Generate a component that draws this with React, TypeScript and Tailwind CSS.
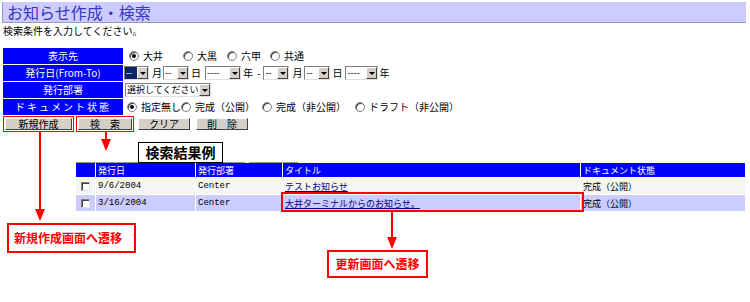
import React from "react";

const font = "font-['MS_PGothic','Noto_Sans_CJK_JP',sans-serif]";

const Radio = ({ checked = false }: { checked?: boolean }) => (
  <span className="inline-flex w-[10px] h-[10px] rounded-full border border-[#808080] bg-white items-center justify-center mr-[4px] shadow-[inset_1px_1px_0_#404040]">
    {checked && <span className="w-[4px] h-[4px] rounded-full bg-black" />}
  </span>
);

const Select = ({ text, width, active = false, className = "" }: { text: string; width: number; active?: boolean; className?: string }) => (
  <span
    className={`inline-flex h-[14px] items-stretch border border-t-[#808080] border-l-[#808080] border-b-[#e0e0e0] border-r-[#e0e0e0] bg-white ${className}`}
    style={{ width }}
  >
    <span className={`flex-1 px-[1px] text-[9px] leading-[12px] overflow-hidden whitespace-nowrap ${active ? "bg-[#0a246a] text-white" : "text-black"}`}>{text}</span>
    <span className="w-[11px] bg-[#d4d0c8] border border-t-white border-l-white border-b-[#404040] border-r-[#404040] flex items-center justify-center">
      <span className="w-0 h-0 border-l-[3px] border-r-[3px] border-t-[3px] border-l-transparent border-r-transparent border-t-black" />
    </span>
  </span>
);

const Btn = ({ label, width }: { label: string; width: number }) => (
  <div
    className="flex h-[12px] items-center justify-center bg-[#d4d0c8] border border-t-white border-l-white border-b-[#404040] border-r-[#404040] text-[10px] leading-none text-black"
    style={{ width }}
  >
    {label}
  </div>
);

const Arrow = ({ x, y1, y2 }: { x: number; y1: number; y2: number }) => (
  <svg className="absolute" style={{ left: x - 6, top: y1 }} width={12} height={y2 - y1}>
    <line x1={6} y1={0} x2={6} y2={y2 - y1 - 10} stroke="#ff0000" strokeWidth={2} />
    <polygon points={`1,${y2 - y1 - 12} 11,${y2 - y1 - 12} 6,${y2 - y1}`} fill="#ff0000" />
  </svg>
);

export default function App() {
  const rows = [
    { date: "9/6/2004", dept: "Center", title: "テストお知らせ", state: "完成（公開）", bg: "bg-[#f5f5f5]" },
    { date: "3/16/2004", dept: "Center", title: "大井ターミナルからのお知らせ。", state: "完成（公開）", bg: "bg-[#ccccff]" },
  ];

  return (
    <div className={`relative w-[750px] h-[302px] bg-white overflow-hidden text-black ${font}`}>
      <div className="pt-[2px] pl-[2px] pr-[4px]">
        <div className="h-[21px] bg-[#ccccff] border-b border-l border-[#9999bb] flex items-center pl-[4px] text-[16px] leading-none text-[#3838c0]">
          お知らせ作成・検索
        </div>
        <div className="text-[10px] leading-[12px] mt-[2px] pl-[1px]">検索条件を入力してください。</div>
      </div>

      <div className="mt-[11px] ml-[3px] grid grid-cols-[120px_1fr] gap-y-px text-[10px] leading-none">
        <div className="h-[16px] bg-[#0000ff] text-white flex items-center justify-center">表示先</div>
        <div className="flex items-center pl-[6px] whitespace-nowrap">
          <Radio checked /><span className="w-[40px]">大井</span>
          <Radio /><span className="w-[30px]">大黒</span>
          <Radio /><span className="w-[29px]">六甲</span>
          <Radio /><span>共通</span>
        </div>

        <div className="h-[16px] bg-[#0000ff] text-white flex items-center justify-center">発行日(From-To)</div>
        <div className="flex items-center pl-[1px]">
          <Select text="--" width={25} active /><span className="ml-[3px]">月</span>
          <Select text="--" width={26} className="ml-[1px]" /><span className="ml-[2px]">日</span>
          <Select text="----" width={36} className="ml-[4px]" /><span className="ml-[2px]">年</span>
          <span className="ml-[4px]">-</span>
          <Select text="--" width={26} className="ml-[3px]" /><span className="ml-[3px]">月</span>
          <Select text="--" width={26} className="ml-[2px]" /><span className="ml-[2px]">日</span>
          <Select text="----" width={33} className="ml-[3px]" /><span className="ml-[1px]">年</span>
        </div>

        <div className="h-[16px] bg-[#0000ff] text-white flex items-center justify-center">発行部署</div>
        <div className="flex items-center pl-[2px]">
          <Select text="選択してください" width={86} />
        </div>

        <div className="h-[16px] bg-[#0000ff] text-white flex items-center justify-center tracking-[2px]">ドキュメント状態</div>
        <div className="flex items-center pl-[4px] whitespace-nowrap">
          <Radio checked /><span className="w-[40px]">指定無し</span>
          <Radio /><span className="w-[67px]">完成（公開）</span>
          <Radio /><span className="w-[79px]">完成（非公開）</span>
          <Radio /><span>ドラフト（非公開）</span>
        </div>
      </div>

      <div className="flex items-center ml-[3px] mt-px h-[16px]">
        <div className="border border-[#ff0000] p-px"><Btn label="新規作成" width={67} /></div>
        <div className="ml-[2px] border border-[#ff0000] p-px"><Btn label="検　索" width={54} /></div>
        <div className="ml-[4px]"><Btn label="クリア" width={52} /></div>
        <div className="ml-[6px]"><Btn label="削　除" width={52} /></div>
      </div>

      <div className="ml-[76px] mt-[10px] flex items-end h-[21px]">
        <div className="w-[62px] border-b border-[#999999]" />
        <div className="w-[85px] h-[21px] border border-black flex items-center justify-center text-[14px] font-bold">検索結果例</div>
        <div className="w-[22px] border-b border-[#999999]" />
        <div className="w-[4px]" />
        <div className="w-[49px] border-b border-[#999999]" />
      </div>

      <div className="ml-[76px] w-[669px] grid grid-cols-[19px_99px_86px_297px_164px] gap-px text-[9px] leading-none">
        <div className="h-[14px] bg-[#0000ff]" />
        <div className="h-[14px] bg-[#0000ff] text-white pl-[2px] flex items-center">発行日</div>
        <div className="h-[14px] bg-[#0000ff] text-white pl-[2px] flex items-center">発行部署</div>
        <div className="h-[14px] bg-[#0000ff] text-white pl-[2px] flex items-center">タイトル</div>
        <div className="h-[14px] bg-[#0000ff] text-white pl-[2px] flex items-center">ドキュメント状態</div>
        {rows.map((r) => (
          <React.Fragment key={r.date}>
            <div className={`h-[16px] ${r.bg} flex items-center justify-center`}>
              <span className="w-[9px] h-[9px] bg-white border border-t-[#808080] border-l-[#808080] border-b-[#e0e0e0] border-r-[#e0e0e0] shadow-[inset_1px_1px_0_#404040]" />
            </div>
            <div className={`h-[16px] ${r.bg} flex items-center pl-[2px] font-['Liberation_Mono',monospace] text-[9px]`}>{r.date}</div>
            <div className={`h-[16px] ${r.bg} flex items-center pl-[2px] font-['Liberation_Mono',monospace] text-[9px]`}>{r.dept}</div>
            <div className={`h-[16px] ${r.bg} flex items-center pl-[2px]`}>
              <span className="underline text-[#000080]">{r.title}</span>
            </div>
            <div className={`h-[16px] ${r.bg} flex items-center pl-[2px]`}>{r.state}</div>
          </React.Fragment>
        ))}
      </div>

      {/* annotations */}
      <div className="absolute left-[281px] top-[192px] w-[303px] h-[20px] border-2 border-[#ff0000]" />
      <Arrow x={40} y1={131} y2={221} />
      <Arrow x={106} y1={131} y2={151} />
      <Arrow x={392} y1={212} y2={249} />
      <div className="absolute left-[7px] top-[223px] w-[129px] h-[30px] border-2 border-[#ff0000] bg-white flex items-center pl-[5px] text-[12px] font-bold text-[#ff0000]">
        新規作成画面へ遷移
      </div>
      <div className="absolute left-[327px] top-[250px] w-[101px] h-[28px] border-2 border-[#ff0000] bg-white flex items-center justify-center text-[12px] font-bold text-[#ff0000]">
        更新画面へ遷移
      </div>
    </div>
  );
}
